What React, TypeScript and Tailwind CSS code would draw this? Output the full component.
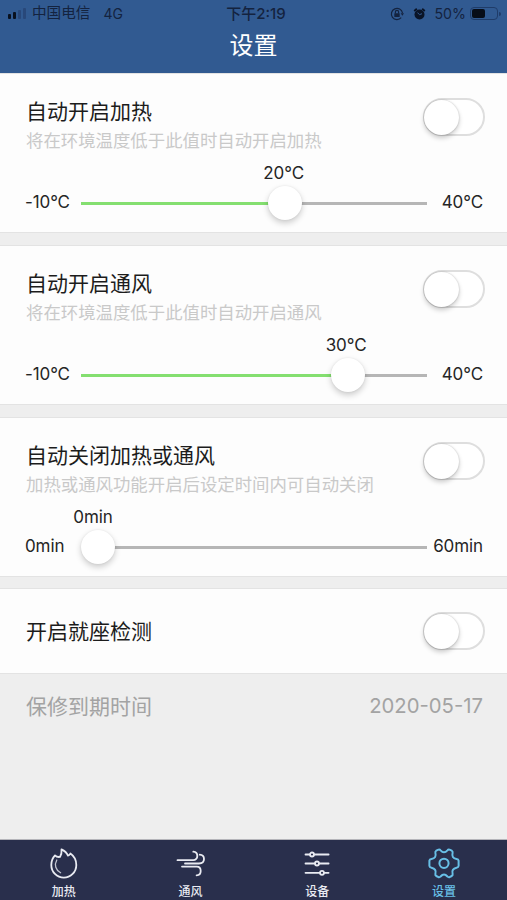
import React from 'react';

const Toggle: React.FC = () => (
  <button
    type="button"
    role="switch"
    aria-checked={false}
    className="flex h-[38px] w-[62px] shrink-0 items-center rounded-full border-2 border-[#dedede] bg-white"
  >
    <span className="-ml-px size-[35px] rounded-full bg-white shadow-[0_3px_5px_rgba(0,0,0,0.2),0_0_2px_rgba(0,0,0,0.22)]" />
  </button>
);

interface SliderProps {
  min: string;
  max: string;
  value: string;
  ratio: number;
}

const THUMB = 34;
const TRACK = 346;

const Slider: React.FC<SliderProps> = ({ min, max, value, ratio }) => {
  const center = THUMB / 2 + ratio * (TRACK - THUMB);

  return (
    <div className="mt-[25px] flex h-[34px] items-center text-[17px] tracking-[-0.1px] text-[#252525]">
      <span className="-ml-px w-[56px] shrink-0 whitespace-nowrap">{min}</span>
      <div className="relative flex h-full w-[346px] shrink-0 items-center">
        <div
          className={ratio > 0 ? 'h-[3px] bg-[#84df70]' : 'h-[3px]'}
          style={{ width: center }}
        />
        <div className="h-[3px] flex-1 bg-[#b6b6b6]" />
        <span
          className="absolute top-0 size-[34px] rounded-full bg-white shadow-[0_3px_6px_rgba(0,0,0,0.2),0_0_2px_rgba(0,0,0,0.08)]"
          style={{ left: center - THUMB / 2 }}
        />
        <span
          className="absolute -top-[25px] -translate-x-1/2 whitespace-nowrap leading-6"
          style={{ left: center - (ratio > 0 ? 1.5 : 5) }}
        >
          {value}
        </span>
      </div>
      <span className="flex-1 whitespace-nowrap pr-[2px] text-right">{max}</span>
    </div>
  );
};

interface SettingCardProps extends SliderProps {
  title: string;
  description: string;
}

const SettingCard: React.FC<SettingCardProps> = ({ title, description, ...slider }) => (
  <section className="mb-[14px] h-[158px] bg-[#fdfdfd] pt-[24px] pr-[22px] pl-[26px] shadow-[0_0_0_1px_#e3e3e3]">
    <div className="flex h-[63px] items-start justify-between">
      <div>
        <h2 className="text-[21px] leading-[27px] text-[#1c1c1c]">{title}</h2>
        <p className="mt-[3px] whitespace-nowrap text-[17.4px] leading-[26px] text-[#c9c9c9]">{description}</p>
      </div>
      <Toggle />
    </div>
    <Slider {...slider} />
  </section>
);

const StatusBar: React.FC = () => (
  <div className="flex h-[28px] items-center text-[14.6px] text-[#14233f]">
    <div className="flex w-[200px] items-center pl-[8px]">
      <div className="flex h-[11px] w-[20px] items-end gap-[2px]">
        <span className="h-[5px] w-[3px] rounded-[1px] bg-[#09111f]" />
        <span className="h-[7px] w-[3px] rounded-[1px] bg-[#09111f]" />
        <span className="h-[9px] w-[3px] rounded-[1px] bg-[#28487a]" />
        <span className="h-[11px] w-[3px] rounded-[1px] bg-[#28487a]" />
      </div>
      <span className="ml-[4px]">中国电信</span>
      <span className="ml-[13px] text-[14px]">4G</span>
    </div>
    <span className="w-[112px] text-center text-[15px] font-medium">下午2:19</span>
    <div className="flex flex-1 items-center justify-end pr-[6px]">
      <svg width="14" height="14" viewBox="0 0 14 14" fill="none" stroke="#14233f" strokeWidth="1.2">
        <path d="M11.2 10.7A5.6 5.6 0 1 1 12.5 6" />
        <path d="M10.7 6.3h3.3l-1.6 2.4z" fill="#14233f" stroke="none" />
        <path d="M5.4 6.5V5a1.6 1.6 0 0 1 3.2 0v1.5" />
        <rect x="4.3" y="6.2" width="5.4" height="3.8" rx=".5" fill="#14233f" stroke="none" />
      </svg>
      <svg className="ml-[9px]" width="13" height="14" viewBox="0 0 13 14" fill="none">
        <circle cx="6.5" cy="7.5" r="5" fill="#0a1427" />
        <path d="M1.2 4 3.8 1.8M11.8 4 9.2 1.8" stroke="#0a1427" strokeWidth="1.8" />
        <path d="M6.5 7.7 4.5 5.6M6.5 7.7 9 6.7" stroke="#315a91" strokeWidth="1" />
      </svg>
      <span className="ml-[8px] text-[14.2px]">50%</span>
      <div className="ml-[4px] flex h-[13px] w-[28px] items-center rounded-[4px] border border-[#1f3c69] pl-[1px]">
        <span className="h-[9px] w-[13px] rounded-[2px] bg-[#070d18]" />
      </div>
      <span className="ml-px h-[4px] w-[2px] rounded-r bg-[#1f3c69]" />
    </div>
  </div>
);

const FlameIcon: React.FC = () => (
  <svg width="32" height="32" viewBox="0 0 32 32" fill="none" stroke="currentColor" strokeWidth="1.8" strokeLinejoin="round" strokeLinecap="round">
    <path d="M7 7.4Q8.8 9.400 12 8.900Q14 6 13.500 1.400Q18.300 3.600 20 7.700Q21.600 7.300 22.400 5.500C26 8 28.300 12.500 28.300 17A12.500 12.700 0 0 1 3.300 17C3.300 13.400 4.600 9.900 7 7.400Z" />
    <path d="M8.8 12C6 16.900 7.700 22.200 12.600 24.800" strokeWidth="1.3" opacity=".8" />
  </svg>
);

const WindIcon: React.FC = () => (
  <svg width="32" height="32" viewBox="0 0 32 32" fill="none" stroke="currentColor" strokeWidth="1.8" strokeLinecap="round">
    <path d="M2.500 12.200h15.800a4 4 0 0 0 4-4.200c0-2.500-1.600-4.100-4-4.300" />
    <path d="M10 15.500h14c3.200 0 5-1.700 5-4.400 0-2.600-1.600-4.200-4.300-4.400" />
    <path d="M7 18.600h14.800c2.400 0 3.900 1.700 3.900 4.400s-1.600 4.300-4.100 4.300" />
  </svg>
);

const SlidersIcon: React.FC = () => (
  <svg width="32" height="32" viewBox="0 0 32 32" fill="none" stroke="currentColor" strokeWidth="1.8" strokeLinecap="round">
    <path d="M4.500 6.500h4.400M13 6.500h14.600M4.500 15.500H14M18 15.500h9.600M4.500 24.800h14.300M23 24.800h4.600" />
    <circle cx="11" cy="6.500" r="2" />
    <circle cx="16" cy="15.500" r="2" />
    <circle cx="21" cy="24.800" r="2" />
  </svg>
);

const GearIcon: React.FC = () => (
  <svg width="32" height="32" viewBox="0 0 32 32" fill="none" stroke="currentColor" strokeWidth="2" strokeLinejoin="round">
    <path d="M8.200 2.700 10.500 1.600Q11.800 1.300 12.600 2.300 16 6.200 19.400 2.300 20.200 1.300 21.500 1.600L23.800 2.700Q25 3.600 24.600 5 23.200 10 28.500 10.900 30.400 11.200 30.600 12.700V17.900Q30.400 19.500 28.500 19.800 23.200 20.900 24.600 25.800 25 27.200 23.800 28L21.500 29.200Q20.200 29.500 19.400 28.500 16 24.500 12.600 28.500 11.800 29.500 10.500 29.200L8.200 28Q7 27.200 7.400 25.800 8.800 20.900 3.500 19.800 1.600 19.500 1.400 17.900V12.700Q1.600 11.200 3.500 10.900 8.800 10 7.400 5 7 3.600 8.200 2.700Z" />
    <circle cx="16" cy="15.300" r="4.600" />
  </svg>
);

const tabs = [
  { label: '加热', icon: <FlameIcon /> },
  { label: '通风', icon: <WindIcon /> },
  { label: '设备', icon: <SlidersIcon /> },
  { label: '设置', icon: <GearIcon />, active: true },
];

const App: React.FC = () => (
  <div className="flex h-[900px] w-[507px] flex-col overflow-hidden bg-[#eeeeee] font-[Inter,'Noto_Sans_CJK_SC',sans-serif]">
    <header className="h-[74px] shrink-0 bg-[#315a91]">
      <StatusBar />
      <h1 className="text-center text-[24px] leading-[35px] text-white">设置</h1>
    </header>

    <main className="flex-1">
      <SettingCard
        title="自动开启加热"
        description="将在环境温度低于此值时自动开启加热"
        min="-10°C"
        max="40°C"
        value="20°C"
        ratio={0.6}
      />
      <SettingCard
        title="自动开启通风"
        description="将在环境温度低于此值时自动开启通风"
        min="-10°C"
        max="40°C"
        value="30°C"
        ratio={0.8}
      />
      <SettingCard
        title="自动关闭加热或通风"
        description="加热或通风功能开启后设定时间内可自动关闭"
        min="0min"
        max="60min"
        value="0min"
        ratio={0}
      />
      <section className="-mt-px flex h-[84px] items-center justify-between bg-[#fdfdfd] pr-[22px] pl-[26px] shadow-[0_0_0_1px_#e3e3e3]">
        <h2 className="pt-[2px] text-[21px] text-[#1c1c1c]">开启就座检测</h2>
        <Toggle />
      </section>
      <div className="flex h-[67px] items-center justify-between pr-[24px] pl-[26px] text-[21px] text-[#a3a3a3]">
        <span>保修到期时间</span>
        <span className="text-[20.3px]">2020-05-17</span>
      </div>
    </main>

    <nav className="flex h-[60.5px] shrink-0 bg-[#292f4c] shadow-[0_-1px_0_#b5b5ba]">
      {tabs.map((tab) => (
        <div
          key={tab.label}
          className={`flex flex-1 flex-col items-center pt-[8.5px] pl-px ${tab.active ? 'text-[#68bfe6]' : 'text-[#e9ebf2]'}`}
        >
          {tab.icon}
          <span className="mt-[4px] text-[12px] font-medium leading-[16px]">{tab.label}</span>
        </div>
      ))}
    </nav>
  </div>
);

export default App;
